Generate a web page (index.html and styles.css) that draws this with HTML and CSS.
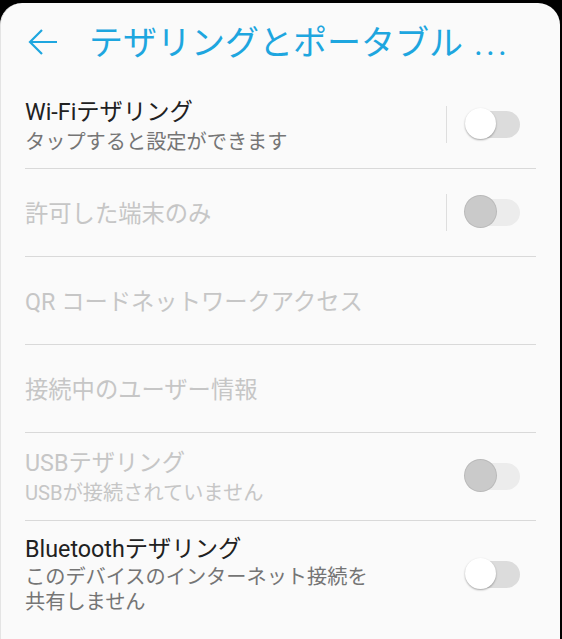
FILE: index.html
```html
<!DOCTYPE html>
<html lang="ja">
<head>
    <meta charset="UTF-8">
    <meta name="viewport" content="width=device-width, initial-scale=1.0">
    <title>テザリングとポータブルアクセスポイント</title>
    <link rel="stylesheet" href="styles.css">
</head>
<body>

    <div class="screen">
        <header class="appbar">
            <svg class="back" width="32" height="32" viewBox="0 0 32 32">
                <path d="M30 16H3M15 4L3 16l12 12" fill="none" stroke="#1ea6df" stroke-width="2.2"/>
            </svg>
            <h1 class="title">テザリングとポータブル<span class="dots">...</span></h1>
        </header>

        <ul class="list">
            <li class="row">
                <div class="text">
                    <div class="label">Wi-Fiテザリング</div>
                    <div class="summary">タップすると設定ができます</div>
                </div>
                <span class="divider"></span>
                <span class="switch"><span class="thumb"></span></span>
            </li>
            <li class="row disabled">
                <div class="text">
                    <div class="label">許可した端末のみ</div>
                </div>
                <span class="divider"></span>
                <span class="switch"><span class="thumb"></span></span>
            </li>
            <li class="row disabled">
                <div class="text">
                    <div class="label">QR コードネットワークアクセス</div>
                </div>
            </li>
            <li class="row disabled">
                <div class="text">
                    <div class="label">接続中のユーザー情報</div>
                </div>
            </li>
            <li class="row disabled usb">
                <div class="text">
                    <div class="label">USBテザリング</div>
                    <div class="summary">USBが接続されていません</div>
                </div>
                <span class="switch"><span class="thumb"></span></span>
            </li>
            <li class="row last">
                <div class="text">
                    <div class="label">Bluetoothテザリング</div>
                    <div class="summary">このデバイスのインターネット接続を<br>共有しません</div>
                </div>
                <span class="switch"><span class="thumb"></span></span>
            </li>
        </ul>
    </div>

</body>
</html>
```

FILE: styles.css
```css
html, body {
    margin: 0;
    background: #000;
}
body {
    font-family: Roboto, "Noto Sans CJK JP", sans-serif;
    height: 639px;
    overflow: hidden;
}
.screen {
    margin-top: 3px;
    margin-right: 2px;
    height: 636px;
    background: #fafafa;
    border-radius: 22px 22px 0 0;
    border-left: 1px solid #e4e4e4;
}
.appbar {
    display: flex;
    align-items: center;
    height: 78px;
    padding-left: 26px;
}
.back {
    flex: none;
}
.title {
    margin: 0 0 4px 30px;
    font-family: "Noto Sans CJK JP", sans-serif;
    font-size: 34px;
    font-weight: 400;
    color: #1ea6df;
    white-space: nowrap;
}
.dots {
    font-family: Roboto, sans-serif;
    margin-left: 11px;
    letter-spacing: 3px;
}
.list {
    list-style: none;
    margin: 0;
    padding: 0 24px;
}
.row {
    display: flex;
    align-items: center;
    height: 87px;
    border-bottom: 1px solid #d9d9d9;
}
.row.usb .text {
    padding-top: 0;
}
.row.last {
    border-bottom: none;
    height: 108px;
    align-items: flex-start;
    padding-top: 9px;
}
.text {
    flex: 1;
    padding-top: 3px;
}
.label {
    font-size: 23.3px;
    color: #212121;
    line-height: 32px;
}
.summary {
    font-size: 20.2px;
    color: #757575;
    line-height: 28px;
}
.last .summary {
    line-height: 25px;
}
.disabled .label,
.disabled .summary {
    color: #c6c6c6;
}
.divider {
    width: 1px;
    height: 37px;
    background: #dedede;
    margin-right: 19px;
}
.switch {
    position: relative;
    width: 54px;
    height: 27px;
    margin-right: 16px;
    border-radius: 14px;
    background: #dcdcdc;
}
.last .switch {
    margin-top: 31px;
}
.thumb {
    position: absolute;
    left: -1px;
    top: -3px;
    width: 31px;
    height: 31px;
    border-radius: 50%;
    background: #fff;
    box-shadow: 0 1px 2px rgba(0, 0, 0, 0.35);
}
.disabled .switch {
    background: #ececec;
}
.disabled .thumb {
    background: #cacaca;
    box-shadow: 0 0 0 1px #b9b9b9;
}
```
